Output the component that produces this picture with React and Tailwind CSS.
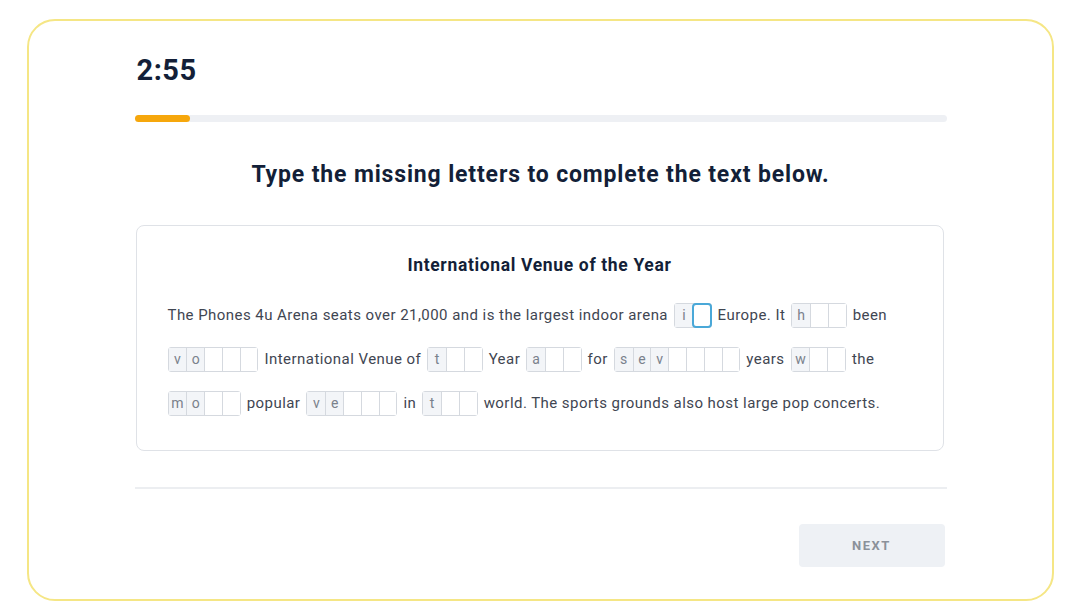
import React from "react";

const font = { fontFamily: "Roboto, 'Liberation Sans', sans-serif" };

const Gap = ({ letters = [], blanks = 0, active = -1, first = false }) => {
  const cells = [...letters.map((l) => ({ l })), ...Array.from({ length: blanks }, () => ({ l: "" }))];
  return (
    <span
      className={
        "inline-flex align-middle h-[25px] rounded-[3px] border border-[#d5d9df] -translate-y-[1px] " +
        (first ? "ml-0 mr-[6px]" : "mx-[6px]")
      }
    >
      {cells.map((c, i) => {
        const isActive = i === active;
        return (
          <span
            key={i}
            className={
              "w-[17.8px] h-full flex items-center justify-center text-[14px] tracking-normal text-[#7a818c] " +
              (c.l ? "bg-[#f3f5f8] " : "bg-white ") +
              (i > 0 ? "border-l border-[#d5d9df] " : "") +
              (isActive ? "outline-2 outline-[#4aa8d8] -outline-offset-1 rounded-[3px] bg-[#f4fafd] " : "")
            }
          >
            {c.l}
          </span>
        );
      })}
    </span>
  );
};

export default function App() {
  return (
    <div className="w-[1089px] h-[616px] bg-white pt-[19px] px-[27px]" style={font}>
      <div className="w-[1027px] h-[582px] rounded-[28px] border-2 border-[#f5e685] flex justify-center">
        <div className="w-[812px] pt-[32px] flex flex-col">
          <div className="pl-[2px] text-[29px] font-bold text-[#131f38] leading-[34px] tracking-[0.5px]">2:55</div>
          <div className="mt-[28px] h-[7px] rounded-full bg-[#eef0f4]">
            <div className="h-full w-[55px] rounded-full bg-[#f6a70c]" />
          </div>
          <h1 className="mt-[39px] text-center text-[23px] font-bold text-[#131f38] leading-[28px] tracking-[0.85px]">
            Type the missing letters to complete the text below.
          </h1>
          <div className="mt-[36px] mx-px w-[808px] h-[226px] rounded-[8px] border border-[#dfe2e7] pt-[28px] px-[31px]">
            <h2 className="text-center text-[17.5px] font-bold text-[#131f38] leading-[22px] tracking-[0.65px]">
              International Venue of the Year
            </h2>
            <div className="mt-[17px] text-[15px] text-[#3f4652] leading-[44px] tracking-[0.45px]">
              <div>
                The Phones 4u Arena seats over 21,000 and is the largest indoor arena
                <Gap letters={["i"]} blanks={1} active={1} />
                Europe. It
                <Gap letters={["h"]} blanks={2} />
                been
              </div>
              <div>
                <Gap letters={["v", "o"]} blanks={3} first />
                International Venue of
                <Gap letters={["t"]} blanks={2} />
                Year
                <Gap letters={["a"]} blanks={2} />
                for
                <Gap letters={["s", "e", "v"]} blanks={4} />
                years
                <Gap letters={["w"]} blanks={2} />
                the
              </div>
              <div>
                <Gap letters={["m", "o"]} blanks={2} first />
                popular
                <Gap letters={["v", "e"]} blanks={3} />
                in
                <Gap letters={["t"]} blanks={2} />
                world. The sports grounds also host large pop concerts.
              </div>
            </div>
          </div>
          <div className="mt-[36px] h-[2px] bg-[#eceef1]" />
          <div className="mt-[35px] flex justify-end pr-[2px]">
            <button className="w-[146px] h-[43px] rounded-[4px] bg-[#eef1f5] text-[13px] font-bold tracking-[1.5px] text-[#8b919a]">
              NEXT
            </button>
          </div>
        </div>
      </div>
    </div>
  );
}
